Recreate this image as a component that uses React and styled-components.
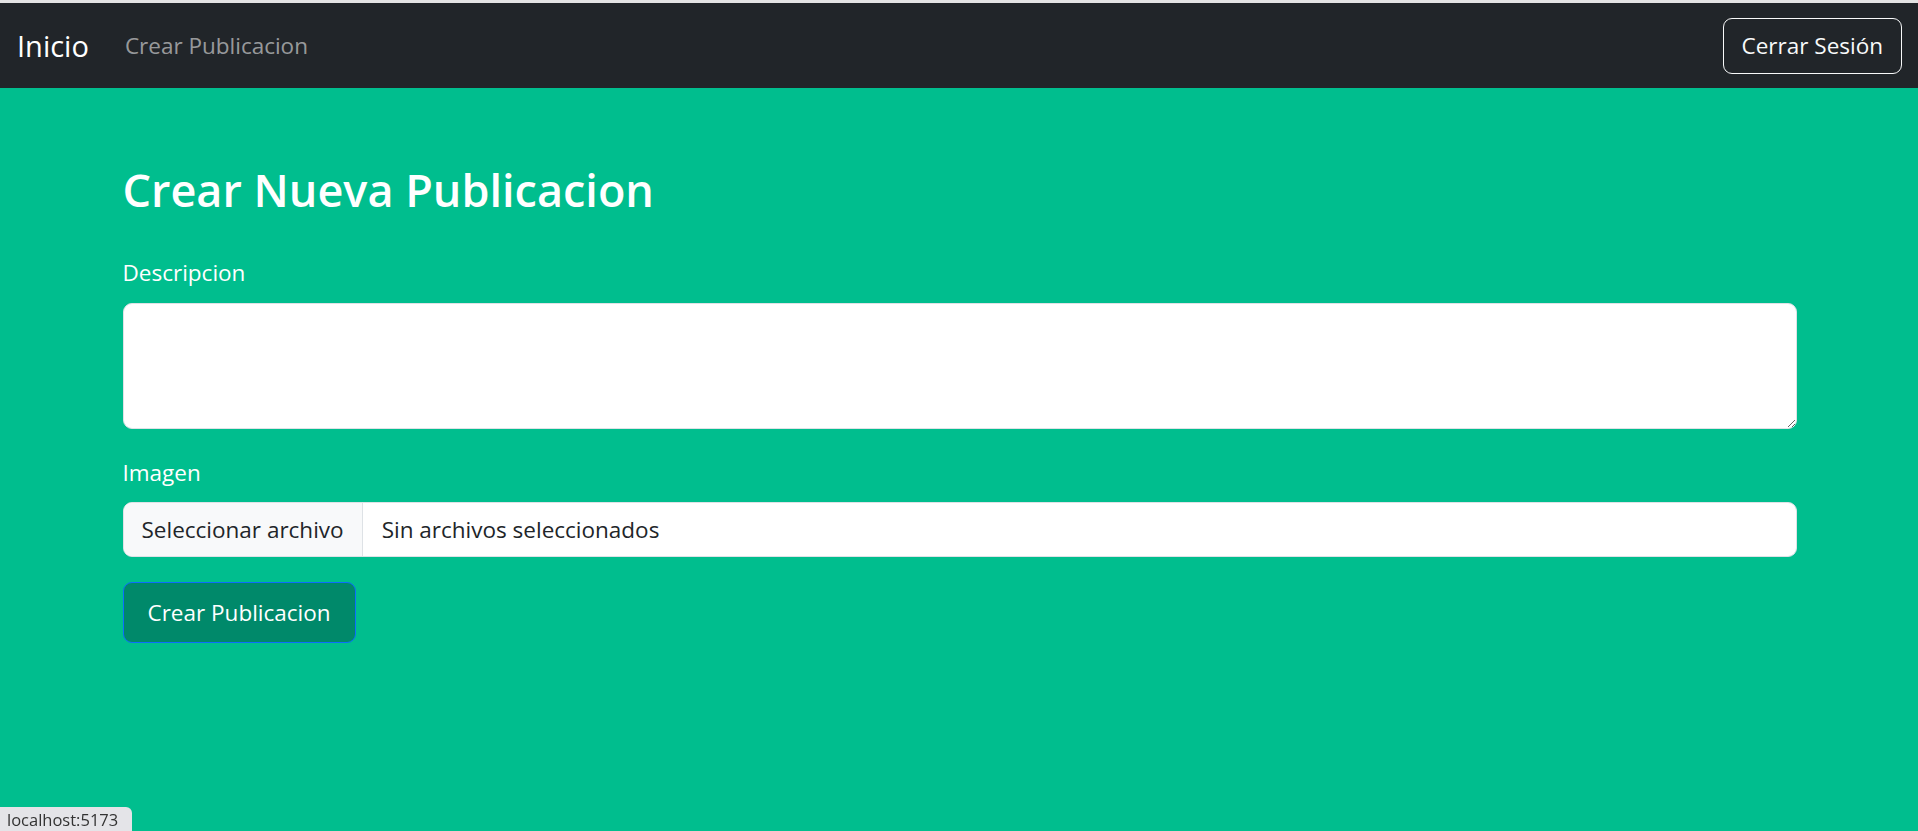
import React from "react";
import styled, { createGlobalStyle } from "styled-components";

const GlobalStyle = createGlobalStyle`
  html, body {
    margin: 0;
    padding: 0;
    height: 100%;
  }
  body {
    background: #00be8e;
    font-family: "Open Sans", "Noto Sans", sans-serif;
    color: #212529;
  }
  #root {
    min-height: 100%;
  }
`;

const Page = styled.div`
  min-height: 831px;
  background: #00be8e;
`;

const TopStrip = styled.div`
  height: 3px;
  background: #e3e3e3;
`;

const Navbar = styled.nav`
  height: 85px;
  background: #212529;
  display: flex;
  align-items: center;
  padding: 0 16px 0 17px;
`;

const Brand = styled.a`
  color: #fff;
  font-size: 29px;
  text-decoration: none;
  margin-right: 36px;
  cursor: pointer;
`;

const NavLink = styled.a`
  color: rgba(255, 255, 255, 0.55);
  font-size: 22.5px;
  text-decoration: none;
  cursor: pointer;
`;

const Spacer = styled.div`
  flex: 1;
`;

const OutlineButton = styled.button`
  height: 56px;
  padding: 0 18px;
  background: transparent;
  color: #f8f9fa;
  border: 1px solid #f8f9fa;
  border-radius: 9px;
  font-family: inherit;
  font-size: 22.5px;
  cursor: pointer;
`;

const Container = styled.main`
  max-width: 1674px;
  margin: 0 auto;
  padding: 74px 0 0 1px;
`;

const Title = styled.h2`
  margin: 0 0 37px;
  font-size: 45px;
  line-height: 56px;
  font-weight: 600;
  color: #fff;
`;

const Field = styled.div`
  margin-bottom: ${(p) => p.$gap || 24}px;
`;

const Label = styled.label`
  display: block;
  color: #fff;
  font-size: 22.5px;
  line-height: 36px;
  margin-bottom: ${(p) => p.$gap || 12}px;
`;

const TextArea = styled.textarea`
  display: block;
  box-sizing: border-box;
  width: 100%;
  height: 126px;
  padding: 9px 18px;
  border: 1px solid #dee2e6;
  border-radius: 9px;
  background: #fff;
  font-family: inherit;
  font-size: 22.5px;
  line-height: 36px;
  color: #212529;
  outline: none;
`;

const FileField = styled.label`
  display: flex;
  align-items: stretch;
  box-sizing: border-box;
  height: 55px;
  border: 1px solid #dee2e6;
  border-radius: 9px;
  background: #fff;
  overflow: hidden;
  cursor: pointer;
`;

const FileButton = styled.span`
  display: flex;
  align-items: center;
  padding: 0 18px;
  background: #f8f9fa;
  border-right: 1px solid #dee2e6;
  font-size: 22.5px;
  color: #212529;
`;

const FileName = styled.span`
  display: flex;
  align-items: center;
  padding: 0 19px;
  font-size: 22.5px;
  color: #212529;
`;

const SubmitButton = styled.button`
  box-sizing: border-box;
  height: 61px;
  padding: 0 24px;
  background: #00896a;
  color: #fff;
  border: 1px solid #0d6efd;
  border-radius: 9px;
  font-family: inherit;
  font-size: 22.5px;
  cursor: pointer;
`;

const StatusBubble = styled.div`
  position: fixed;
  left: 0;
  bottom: 0;
  box-sizing: border-box;
  width: 132px;
  height: 24px;
  padding: 0 0 0 7px;
  display: flex;
  align-items: center;
  background: #e4e4e8;
  border-top-right-radius: 6px;
  font-family: "Open Sans", sans-serif;
  font-size: 16.5px;
  color: #333;
`;

export default function App() {
  return (
    <Page>
      <GlobalStyle />
      <TopStrip />
      <Navbar>
        <Brand>Inicio</Brand>
        <NavLink>Crear Publicacion</NavLink>
        <Spacer />
        <OutlineButton>Cerrar Sesión</OutlineButton>
      </Navbar>
      <Container>
        <Title>Crear Nueva Publicacion</Title>
        <form onSubmit={(e) => e.preventDefault()}>
          <Field $gap={26}>
            <Label htmlFor="descripcion">Descripcion</Label>
            <TextArea id="descripcion" rows={3} />
          </Field>
          <Field $gap={25}>
            <Label $gap={11}>Imagen</Label>
            <FileField>
              <FileButton>Seleccionar archivo</FileButton>
              <FileName>Sin archivos seleccionados</FileName>
            </FileField>
          </Field>
          <SubmitButton type="submit">Crear Publicacion</SubmitButton>
        </form>
      </Container>
      <StatusBubble>localhost:5173</StatusBubble>
    </Page>
  );
}
